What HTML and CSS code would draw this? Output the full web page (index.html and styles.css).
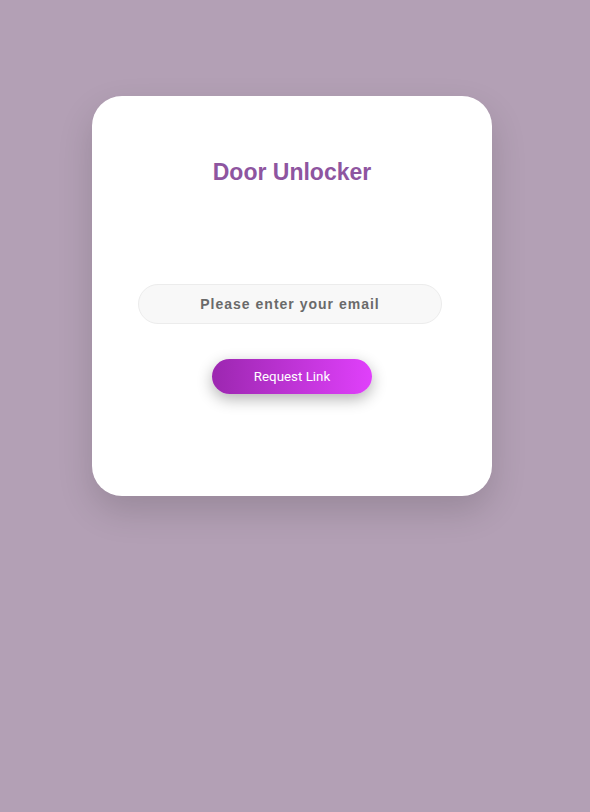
FILE: index.html
```html
<!DOCTYPE html>
<html>
<head>
<meta charset="utf-8">
<link rel="stylesheet" href="styles.css">
</head>
<body>
<div class="page">
  <div class="card">
    <h2 class="title">Door Unlocker</h2>
    <input class="email" type="email" placeholder="Please enter your email">
    <button class="btn">Request Link</button>
  </div>
</div>
</body>
</html>
```
FILE: styles.css
```css
html, body {
  margin: 0;
  padding: 0;
  background: #b3a0b5;
  height: 100%;
}
.page {
  padding: 96px 0 0 92px;
}
.card {
  width: 400px;
  height: 400px;
  box-sizing: border-box;
  background: #fff;
  border-radius: 30px;
  box-shadow: 0 15px 35px rgba(0, 0, 0, 0.15);
  display: flex;
  flex-direction: column;
  align-items: center;
  padding-top: 60px;
}
.title {
  margin: 0;
  font-family: "Liberation Sans", Arial, sans-serif;
  font-weight: bold;
  font-size: 23px;
  line-height: 32px;
  color: #8e55a0;
}
.email {
  margin-top: 96px;
  margin-right: 4px;
  width: 304px;
  height: 40px;
  box-sizing: border-box;
  border: 1px solid #ececec;
  border-radius: 20px;
  background: #f8f8f8;
  text-align: center;
  font-family: "Liberation Sans", Arial, sans-serif;
  font-weight: bold;
  font-size: 14px;
  letter-spacing: 1px;
  color: #666;
  outline: none;
}
.email::placeholder {
  color: #6a6a6a;
  opacity: 1;
}
.btn {
  margin-top: 35px;
  width: 160px;
  height: 35px;
  border: none;
  border-radius: 18px;
  background: linear-gradient(90deg, #9c27b0, #e040fb);
  color: #fff;
  font-family: Roboto, "Liberation Sans", sans-serif;
  font-size: 13.333px;
  box-shadow: 0 5px 15px rgba(0, 0, 0, 0.3);
  cursor: pointer;
}
```
